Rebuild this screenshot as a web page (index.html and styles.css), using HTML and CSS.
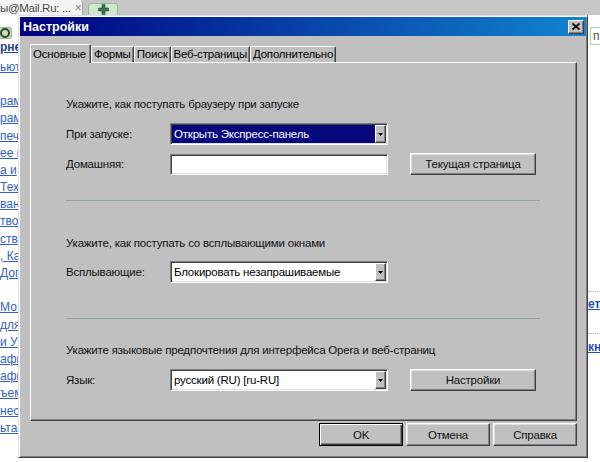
FILE: index.html
```html
<!DOCTYPE html>
<html lang="ru">
<head>
<meta charset="utf-8">
<title>Настройки</title>
<link rel="stylesheet" href="styles.css">
</head>
<body>
<div class="screen">
  <div class="tabstrip">
    <div class="btab"><span class="btab-text">ы@Mail.Ru: ...</span><span class="btab-x">×</span></div>
    <div class="btab-plus">
      <svg width="11" height="11" viewBox="0 0 11 11"><path d="M4 0.5h3v3.5h3.5v3h-3.5v3.5h-3v-3.5h-3.5v-3h3.5z" fill="#3f6e52" stroke="#2c4f3a" stroke-width="0.6"/></svg>
    </div>
  </div>
  <div class="main">
    <div class="page-left">
      <div class="pl-btn"><span class="pl-ring"></span></div>
      <div class="pl-links">
        <div class="lk strong">рне</div>
        <div class="lk-space"></div>
        <div class="lk">ьют</div>
        <div class="lk blank"></div>
        <div class="lk">рамі</div>
        <div class="lk">рамі</div>
        <div class="lk">печe</div>
        <div class="lk">ее к</div>
        <div class="lk">а и </div>
        <div class="lk">Тех</div>
        <div class="lk">ван</div>
        <div class="lk">тво,</div>
        <div class="lk">ств</div>
        <div class="lk">, Ка</div>
        <div class="lk">Дог</div>
        <div class="lk blank"></div>
        <div class="lk">Мо,</div>
        <div class="lk">для</div>
        <div class="lk">и У</div>
        <div class="lk">афия</div>
        <div class="lk">афи</div>
        <div class="lk">ъем</div>
        <div class="lk">неск</div>
        <div class="lk">ьтац</div>
      </div>
    </div>

    <div class="dialog">
      <div class="titlebar">
        <span class="title">Настройки</span>
        <span class="close">
          <svg width="8" height="7" viewBox="0 0 8 7"><path d="M0.5 0.5L7.5 6.5M7.5 0.5L0.5 6.5" stroke="#000" stroke-width="1.7"/></svg>
        </span>
      </div>
      <div class="tabs">
        <div class="tab active">Основные</div>
        <div class="tab">Формы</div>
        <div class="tab">Поиск</div>
        <div class="tab">Веб-страницы</div>
        <div class="tab">Дополнительно</div>
      </div>
      <div class="panel">
        <div class="heading h1">Укажите, как поступать браузеру при запуске</div>
        <div class="row r1">
          <span class="label">При запуске:</span>
          <div class="field select focused"><span class="sel-text">Открыть Экспресс-панель</span><span class="sel-btn"><svg width="5" height="3" viewBox="0 0 5 3"><path d="M0 0h5L2.5 3z" fill="#000"/></svg></span></div>
        </div>
        <div class="row r2">
          <span class="label">Домашняя:</span>
          <div class="field input"></div>
          <div class="btn side">Текущая страница</div>
        </div>
        <div class="sep s1"></div>
        <div class="heading h2">Укажите, как поступать со всплывающими окнами</div>
        <div class="row r3">
          <span class="label">Всплывающие:</span>
          <div class="field select"><span class="sel-text">Блокировать незапрашиваемые</span><span class="sel-btn"><svg width="5" height="3" viewBox="0 0 5 3"><path d="M0 0h5L2.5 3z" fill="#000"/></svg></span></div>
        </div>
        <div class="sep s2"></div>
        <div class="heading h3">Укажите языковые предпочтения для интерфейса Opera и веб-страниц</div>
        <div class="row r4">
          <span class="label">Язык:</span>
          <div class="field select"><span class="sel-text">русский (RU) [ru-RU]</span><span class="sel-btn"><svg width="5" height="3" viewBox="0 0 5 3"><path d="M0 0h5L2.5 3z" fill="#000"/></svg></span></div>
          <div class="btn side">Настройки</div>
        </div>
      </div>
      <div class="buttons">
        <div class="btn dlg default">OK</div>
        <div class="btn dlg">Отмена</div>
        <div class="btn dlg">Справка</div>
      </div>
    </div>

    <div class="page-right">
      <div class="pr-box">п</div>
      <div class="pr-dots d1"></div>
      <div class="pr-link l1">ет</div>
      <div class="pr-dots d2"></div>
      <div class="pr-link l2">кн</div>
    </div>
  </div>
</div>
</body>
</html>
```

FILE: styles.css
```css
html, body {
  margin: 0;
  padding: 0;
}
body {
  width: 600px;
  height: 462px;
  overflow: hidden;
  background: #fff;
  font-family: "Liberation Sans", Arial, sans-serif;
  font-size: 12px;
  line-height: 14px;
  color: #000;
}
.screen {
  width: 600px;
  height: 462px;
  overflow: hidden;
}

/* background browser tab strip */
.tabstrip {
  height: 15px;
  background: #c6c6c6;
  display: flex;
  align-items: flex-end;
}
.btab {
  width: 83px;
  height: 15px;
  box-sizing: border-box;
  background: #f3f3f3;
  border-right: 1px solid #9aa89c;
  border-top-right-radius: 3px;
  display: flex;
  align-items: center;
  overflow: hidden;
  white-space: nowrap;
  font-size: 11.5px;
}
.btab-text {
  color: #4a4a4a;
  letter-spacing: -0.3px;
}
.btab-x {
  color: #8a8a8a;
  font-size: 12px;
  margin-left: 4px;
}
.btab-plus {
  width: 30px;
  height: 12px;
  margin-left: 5px;
  box-sizing: border-box;
  background: #cfe9cf;
  border: 1px solid #8fbf95;
  border-bottom: none;
  border-radius: 3px 3px 0 0;
  display: flex;
  align-items: center;
  justify-content: center;
}

.main {
  display: flex;
  height: 447px;
}

/* left visible part of page */
.page-left {
  width: 18px;
  overflow: hidden;
  background: #fff;
  flex: none;
}
.pl-btn {
  width: 12px;
  height: 12px;
  margin-top: 12px;
  box-sizing: border-box;
  background: #c3e3bb;
  border: 1px solid #8cb888;
  border-left: none;
  border-radius: 0 3px 3px 0;
  display: flex;
  align-items: center;
  justify-content: flex-end;
  padding-right: 1px;
  overflow: hidden;
}
.pl-ring {
  flex: none;
  width: 6px;
  height: 6px;
  border: 2px solid #3b3b3b;
  border-radius: 50%;
}
.pl-links {
  display: flex;
  flex-direction: column;
}
.lk {
  height: 17.2px;
  line-height: 17.2px;
  white-space: nowrap;
  color: #2f5fc6;
  text-decoration: underline;
  overflow: hidden;
}
.lk.strong {
  color: #1c4096;
  font-weight: bold;
}
.lk-space {
  height: 2.6px;
}

/* dialog window */
.dialog {
  width: 570px;
  height: 443px;
  flex: none;
  box-sizing: border-box;
  background: #c0c0c0;
  border: 1px solid;
  border-color: #dfdfdf #404040 #404040 #dfdfdf;
  box-shadow: inset 1px 1px #fff, inset -1px -1px #808080;
  padding: 1px;
  display: flex;
  flex-direction: column;
  font-size: 11.5px;
  letter-spacing: -0.2px;
}
.titlebar {
  height: 19px;
  background: linear-gradient(to right, #000080, #1084d0);
  display: flex;
  align-items: center;
  justify-content: space-between;
  padding: 0 2px 0 3px;
}
.title {
  color: #fff;
  font-weight: bold;
  font-size: 12.5px;
  letter-spacing: 0;
}
.close {
  width: 16px;
  height: 14px;
  box-sizing: border-box;
  background: #c0c0c0;
  border: 1px solid;
  border-color: #fff #404040 #404040 #fff;
  box-shadow: inset -1px -1px #808080;
  display: flex;
  align-items: center;
  justify-content: center;
}

.tabs {
  display: flex;
  align-items: flex-end;
  height: 18px;
  margin: 8px 0 0 10px;
  position: relative;
  z-index: 2;
}
.tab {
  box-sizing: border-box;
  height: 16px;
  padding: 0 2px 1px 2px;
  border-top: 1px solid #fff;
  border-left: 1px solid #fff;
  border-right: 1px solid #404040;
  box-shadow: inset -1px 0 #808080;
  border-radius: 2px 2px 0 0;
  background: #c0c0c0;
  white-space: nowrap;
}
.tab.active {
  height: 19px;
  padding: 2px 4px 2px 2px;
  margin-bottom: -1px;
}

.panel {
  width: 547px;
  height: 359px;
  margin-left: 10px;
  box-sizing: border-box;
  border: 1px solid;
  border-color: #fff #404040 #404040 #fff;
  box-shadow: inset -1px -1px #808080;
  padding: 34px 0 0 35px;
  display: flex;
  flex-direction: column;
  position: relative;
  z-index: 1;
}
.heading {
  height: 14px;
  white-space: nowrap;
  color: #111;
}
.h2 { margin-top: 35px; }
.h3 { margin-top: 24px; }
.row {
  display: flex;
  align-items: center;
  height: 22px;
}
.r1 { margin-top: 12px; }
.r2 { margin-top: 8px; }
.r3 { margin-top: 11px; }
.r4 { margin-top: 12px; }
.label {
  width: 104px;
  color: #111;
  white-space: nowrap;
}
.field {
  width: 218px;
  height: 22px;
  box-sizing: border-box;
  background: #fff;
  border: 1px solid;
  border-color: #808080 #fff #fff #808080;
  box-shadow: inset 1px 1px #404040, inset -1px -1px #dfdfdf;
  padding: 1px;
  display: flex;
}
.input {
  height: 21px;
}
.sel-text {
  flex: 1;
  padding-left: 2px;
  line-height: 18px;
  white-space: nowrap;
  overflow: hidden;
  color: #000;
}
.focused .sel-text {
  background: #08087e;
  color: #fff;
}
.sel-btn {
  width: 11px;
  height: 18px;
  box-sizing: border-box;
  background: #c0c0c0;
  border: 1px solid;
  border-color: #fff #404040 #404040 #fff;
  box-shadow: inset -1px -1px #808080;
  display: flex;
  align-items: center;
  justify-content: center;
}

.btn {
  box-sizing: border-box;
  background: #c0c0c0;
  border: 1px solid;
  border-color: #fff #404040 #404040 #fff;
  box-shadow: inset -1px -1px #808080, inset 1px 1px #dfdfdf;
  display: flex;
  align-items: center;
  justify-content: center;
  color: #111;
  white-space: nowrap;
}
.btn.side {
  width: 126px;
  height: 22px;
  margin-left: 22px;
}
.sep {
  width: 474px;
  height: 1px;
  background: #8ea597;
}
.s1 { margin-top: 25px; }
.s2 { margin-top: 35px; }

.buttons {
  display: flex;
  justify-content: flex-end;
  gap: 3px;
  margin: 2px 9px 0 0;
}
.btn.dlg {
  width: 84px;
  height: 23px;
}
.btn.default {
  border-color: #000;
  box-shadow: inset 1px 1px #fff, inset -1px -1px #404040, inset -2px -2px #808080;
}

/* right visible part of page */
.page-right {
  width: 12px;
  flex: none;
  overflow: hidden;
  background: #fff;
  display: flex;
  flex-direction: column;
}
.pr-box {
  height: 18px;
  margin: 12px 0 0 2px;
  box-sizing: border-box;
  border: 1px solid #a6d6ad;
  border-right: none;
  padding-left: 2px;
  line-height: 16px;
  color: #555;
}
.pr-dots {
  height: 0;
  border-top: 1px dotted #b8b8b8;
}
.d1 { margin-top: 246px; }
.d2 { margin-top: 22px; }
.pr-link {
  height: 14px;
  color: #1d4fc0;
  font-weight: bold;
  text-decoration: underline;
  white-space: nowrap;
}
.l1 { margin-top: 5px; }
.l2 { margin-top: 6px; }
```
